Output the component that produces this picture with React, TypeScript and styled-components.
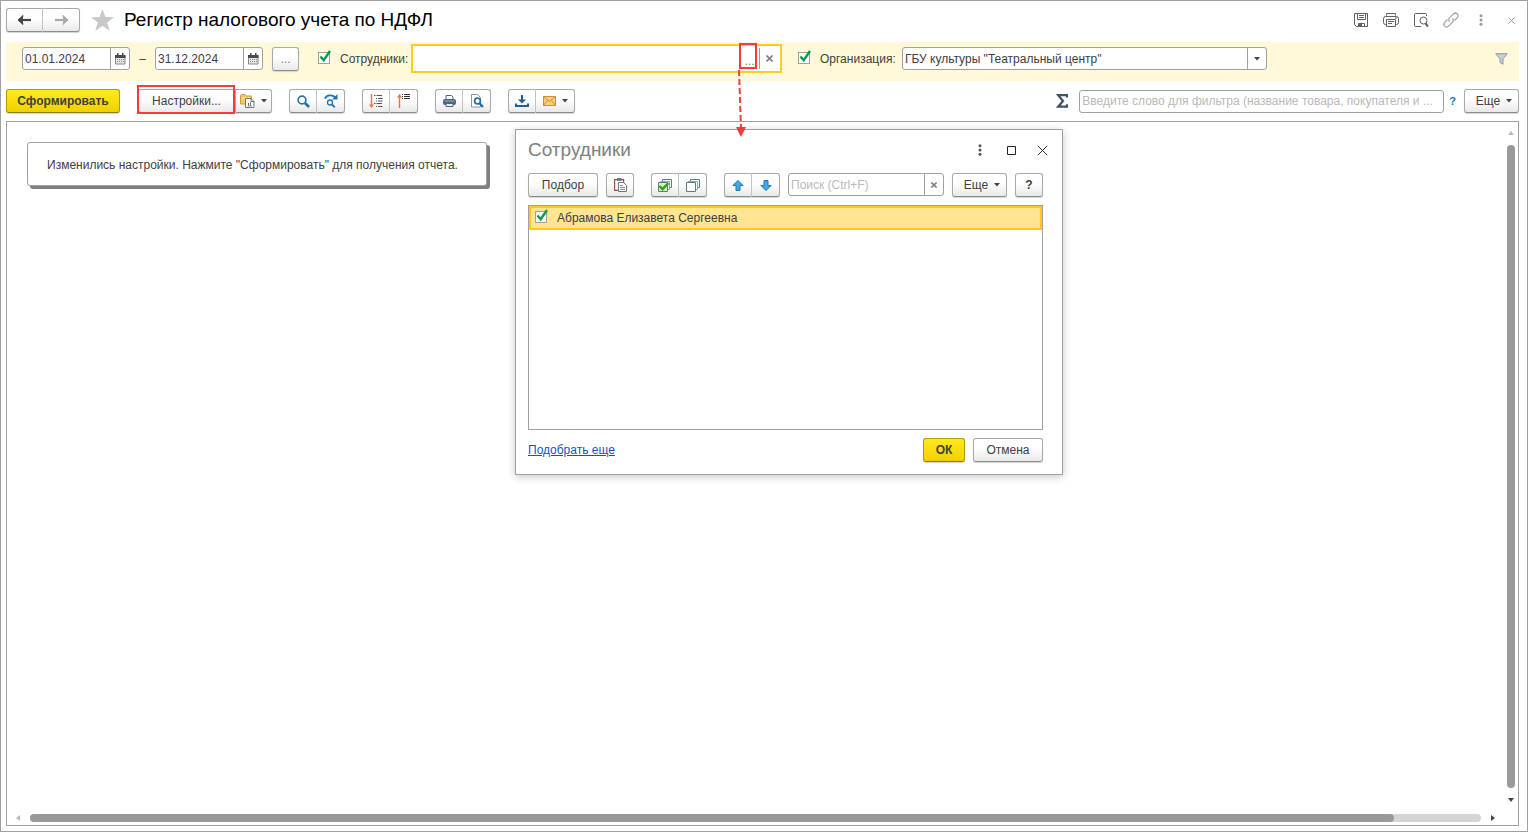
import React from "react";
import styled, { createGlobalStyle, css } from "styled-components";

const GlobalStyle = createGlobalStyle`
  *, *::before, *::after { box-sizing: border-box; }
  body { margin: 0; background: #fff; }
  body, button, input {
    font-family: "Liberation Sans", Arial, sans-serif;
    font-size: 12px;
    line-height: 16px;
    color: #404040;
  }
  svg { display: block; flex: none; }
`;

const Window = styled.main`
  position: relative;
  display: flex;
  flex-direction: column;
  min-height: 100vh;
  padding: 5px 8px 5px 5px;
  border: 1px solid #a0a0a0;
`;

const TitleBar = styled.header`
  display: flex;
  align-items: center;
  height: 28px;
  gap: 11px;
`;

const Title = styled.h1`
  flex: 1;
  margin: 0 0 0 -1px;
  font-size: 19px;
  line-height: 24px;
  font-weight: 400;
  color: #000;
`;

const WindowTools = styled.div`
  display: flex;
  align-items: center;
  gap: 6px;
  margin-right: -4px;
`;

const GhostButton = styled.button<{ $w?: number }>`
  display: flex;
  align-items: center;
  justify-content: center;
  width: ${(p) => p.$w ?? 24}px;
  height: 24px;
  padding: 0;
  border: 0;
  background: transparent;
`;

const buttonFace = css`
  border: 1px solid #a9a9a9;
  border-bottom-color: #8c8c8c;
  background: linear-gradient(#fff 40%, #e9e9e9);
  box-shadow: 0 1px 1px #d4d4d4;
`;

const Button = styled.button<{ $w?: number; $primary?: boolean }>`
  ${buttonFace}
  display: flex;
  flex: none;
  align-items: center;
  justify-content: center;
  gap: 6px;
  width: ${(p) => p.$w ?? 28}px;
  height: 24px;
  padding: 0;
  border-radius: 3px;
  white-space: nowrap;
  ${(p) =>
    p.$primary &&
    css`
      border-color: #b39b00;
      border-bottom-color: #8f7c00;
      background: linear-gradient(#ffea1f, #f2d000);
      font-weight: 700;
    `}
`;

const MoreButton = styled(Button)`
  padding-left: 5px;
`;

const ButtonGroup = styled.div`
  display: flex;
  flex: none;
  & > button { border-radius: 0; }
  & > button + button { border-left: 0; }
  & > button:first-child { border-radius: 3px 0 0 3px; border-right-color: #c0c0c0; }
  & > button:last-child { border-radius: 0 3px 3px 0; }
`;

const FilterBar = styled.section`
  display: flex;
  align-items: center;
  height: 39px;
  margin-top: 8px;
  padding: 0 10px 6px 16px;
  background: #fff9d9;
`;

const Field = styled.div<{ $w: number }>`
  display: flex;
  flex: 0 1 ${(p) => p.$w}px;
  min-width: 0;
  height: 23px;
  border: 1px solid #a0a0a0;
  border-radius: 3px;
  background: #fff;
`;

const FieldInput = styled.input`
  flex: 1;
  width: 0;
  min-width: 0;
  padding: 0 2px;
  border: 0;
  outline: 0;
  background: transparent;
  text-overflow: ellipsis;
  &::placeholder { color: #b9b9b9; opacity: 1; }
`;

const FieldButton = styled.button`
  display: flex;
  flex: none;
  align-items: center;
  justify-content: center;
  width: 19px;
  padding: 0;
  border: 0;
  border-left: 1px solid #a0a0a0;
  background: transparent;
`;

const Dash = styled.span`
  width: 25px;
  text-align: center;
`;

const ActiveField = styled.div`
  position: relative;
  display: flex;
  flex: 0 1 371px;
  align-items: center;
  min-width: 0;
  height: 29px;
  margin-right: 16px;
  padding-right: 2px;
  border: 2px solid #ffcc1f;
  background: #fff;
  & > ${FieldButton} { height: 21px; }
`;

const ChooseButton = styled(FieldButton)`
  border-left: 0;
  align-items: flex-end;
  color: #808080;
`;

const CheckLabel = styled.label`
  display: flex;
  flex: none;
  align-items: center;
  gap: 9px;
`;

const LabelText = styled.span<{ $w?: number }>`
  min-width: ${(p) => p.$w ?? 0}px;
`;

const CheckBox = styled.span`
  position: relative;
  width: 13px;
  height: 14px;
  input {
    display: block;
    appearance: none;
    width: 12px;
    height: 12px;
    margin: 0;
    border: 1px solid #a0a0a0;
    background: #fff;
  }
  svg {
    position: absolute;
    top: -2px;
    left: 0;
    pointer-events: none;
  }
`;

const FilterButton = styled(GhostButton)`
  margin-left: auto;
`;

const Toolbar = styled.section`
  display: flex;
  align-items: center;
  gap: 17px;
  padding: 8px 0;
`;

const SearchArea = styled.div`
  display: flex;
  flex: 1;
  align-items: center;
  justify-content: flex-end;
  gap: 8px;
`;

const SigmaBox = styled.span`
  margin-right: 3px;
`;

const HelpMark = styled.a`
  margin-left: -3px;
  color: #0a7cc4;
  font-size: 11px;
  font-weight: 700;
  text-decoration: none;
`;

const Highlight = styled.span`
  position: absolute;
  inset: -4px 0 -1px -1px;
  border: 2px solid #f23c3c;
  pointer-events: none;
`;

const Highlighted = styled.div`
  position: relative;
  display: flex;
`;

const ChooseHighlight = styled(Highlight)`
  inset: -3px 23px 2px auto;
  width: 18px;
`;

const Arrow = styled.svg`
  position: absolute;
  z-index: 3;
  top: 24px;
  right: 33px;
  pointer-events: none;
`;

const Report = styled.section`
  display: grid;
  flex: 1;
  grid-template-columns: 1fr 15px;
  grid-template-rows: 1fr 15px;
  border: 1px solid #a0a0a0;
`;

const Notice = styled.p`
  justify-self: start;
  align-self: start;
  min-width: 460px;
  margin: 20px;
  padding: 14px 19px 12px;
  border: 1px solid #a0a0a0;
  border-radius: 3px;
  background: #fff;
  box-shadow: 3px 3px 0 #808080;
`;

const VScroll = styled.div`
  display: flex;
  flex-direction: column;
  align-items: center;
  padding: 8px 0 7px;
  gap: 9px;
  span { flex: 1; width: 8px; border-radius: 4px; background: #999; }
`;

const HScroll = styled.div`
  display: flex;
  align-items: center;
  gap: 9px;
  padding: 0 7px 0 8px;
`;

const HTrack = styled.span`
  flex: 1;
  height: 8px;
  border-radius: 4px;
  background: #d5d5d5;
  i { display: block; width: 94%; height: 8px; border-radius: 4px; background: #999; }
`;

const Dialog = styled.section`
  position: absolute;
  z-index: 2;
  top: 128px;
  left: 514px;
  width: 548px;
  padding: 8px 19px 12px 12px;
  border: 1px solid #a0a0a0;
  background: #fff;
  box-shadow: 0 2px 8px rgba(0, 0, 0, 0.22);
`;

const DialogHead = styled.header`
  display: flex;
  align-items: center;
  margin-right: -11px;
  gap: 7px;
`;

const DialogTitle = styled.h2`
  flex: 1;
  margin: 0;
  font-size: 19px;
  line-height: 24px;
  font-weight: 400;
  color: #808080;
`;

const DialogTools = styled.div`
  display: flex;
  gap: 8px;
  margin: 11px 0 8px;
  & > ${ButtonGroup} { margin-left: 9px; }
`;

const List = styled.ul`
  height: 225px;
  margin: 0;
  padding: 0;
  border: 1px solid #a0a0a0;
  list-style: none;
`;

const ListRow = styled.li`
  display: flex;
  align-items: center;
  height: 24px;
  padding-left: 4px;
  border: 2px solid #ffc81f;
  background: #ffe591;
`;

const DialogFoot = styled.footer`
  display: flex;
  align-items: center;
  gap: 8px;
  margin-top: 8px;
`;

const PickLink = styled.a`
  margin-right: auto;
  color: #1a4fc0;
`;

const Caret = () => (
  <svg width="6" height="4" viewBox="0 0 6 4"><path d="M0 0h6L3 3.5z" fill="#444" /></svg>
);

const Cross = ({ size = 7, color = "#808080", w = 1.6 }) => (
  <svg width={size} height={size} viewBox="0 0 10 10" stroke={color} strokeWidth={(w * 10) / size}>
    <path d="M.7.7l8.6 8.6M9.3.7L.7 9.3" />
  </svg>
);

const Dots = ({ color }: { color: string }) => (
  <svg width="4" height="12" viewBox="0 0 4 12" fill={color}>
    <circle cx="2" cy="1.7" r="1.5" /><circle cx="2" cy="6" r="1.5" /><circle cx="2" cy="10.3" r="1.5" />
  </svg>
);

const Calendar = () => (
  <svg width="11" height="13" viewBox="0 0 11 13">
    <path d="M.5 3.500h9.500v8.500h-9.500z" fill="#e6e6e6" stroke="#8a8a8a" />
    <path d="M0 3h10.500v3H0zM2 1h1.500v3H2zM7 1h1.500v3H7z" fill="#4a4a4a" />
    <path d="M2 7.500h7M2 9.500h7" stroke="#8a8a8a" strokeDasharray="1 1" />
  </svg>
);

const Check = () => (
  <svg width="14" height="13" viewBox="0 0 14 13" fill="none">
    <path d="M2.500 6.500l3.200 3.700L12 1" stroke="#0b9a4d" strokeWidth="2.400" />
  </svg>
);

const NavArrow = ({ color, flip }: { color: string; flip?: boolean }) => (
  <svg width="15" height="12" viewBox="0 0 15 12" fill={color} stroke={color}>
    <path d={flip ? "M1 6h9" : "M14 6H5"} strokeWidth="2.200" />
    <path d={flip ? "M9 1.500L14 6l-5 4.500 1-4.500z" : "M6 1.500L1 6l5 4.500L5 6z"} />
  </svg>
);

const Star = () => (
  <svg width="23" height="22" viewBox="0 0 24 23">
    <path d="M12 0l3 8.300 9 .3-7.100 5.400 2.600 8.800L12 17.600l-7.500 5.200L7.100 14 0 8.600l9-.3z" fill="#c8c8c8" />
  </svg>
);

const SaveIcon = () => (
  <svg width="16" height="16" viewBox="0 0 16 16" fill="none" stroke="#606060">
    <path d="M1.500 1.500h13v13h-11l-2-2zM4.500 1.500v6h8v-6M6 3.500h5M6 5.500h5M5.500 14.500v-3h6v3" />
    <path d="M6 12h3v2.500H6z" fill="#606060" stroke="none" />
  </svg>
);

const PrinterOutline = () => (
  <svg width="16" height="16" viewBox="0 0 16 16" fill="none" stroke="#606060">
    <path d="M3.500 3.500v-2h9v2M3.500 12.500h-1q-2 0-2-2v-4q0-2 2-2h11q2 0 2 2v4q0 2-2 2h-1M3.500 7.500h9v7h-9zM5 9.500h6M5 11.500h4M12 6h2" />
  </svg>
);

const PreviewOutline = () => (
  <svg width="16" height="16" viewBox="0 0 16 16" fill="none" stroke="#606060">
    <path d="M8 14.500H2.500q-1 0-1-1v-11q0-1 1-1h10q1 0 1 1V4" />
    <circle cx="10.500" cy="8.500" r="3.500" />
    <path d="M12.500 11.500l2.500 3" strokeWidth="2" />
  </svg>
);

const LinkIcon = () => (
  <svg width="16" height="16" viewBox="0 0 16 16" fill="none" stroke="#a0a0a0" strokeWidth="1.200">
    <path d="M6.500 9.800a2.700 2.700 0 010-3.900l4-4a2.650 2.650 0 013.800 3.800L11.500 8.500M9.500 6.200a2.700 2.700 0 010 3.900l-4 4a2.650 2.650 0 01-3.800-3.800l2.800-2.800" />
  </svg>
);

const Funnel = () => (
  <svg width="13" height="12" viewBox="0 0 13 12">
    <path d="M.7.7h11.600L8 5.800v5.500L5 9.500V5.800z" fill="#c6d0d8" stroke="#8c979f" />
  </svg>
);

const FolderReport = () => (
  <svg width="15" height="14" viewBox="0 0 15 14">
    <path d="M.5 1.500l1-1h3.500l1 1.500h5.500v8h-11z" fill="#f3c968" stroke="#cf9b35" />
    <path d="M1 4h10" stroke="#fbe3a5" />
    <path d="M5.500 4.500h5.500l3 3v6H5.500z" fill="#fff" stroke="#777" />
    <path d="M11 4.500v3h3" fill="none" stroke="#777" />
    <path d="M8.500 12V9" stroke="#c43b3b" /><path d="M10.500 12V8" stroke="#3b8ac4" />
    <path d="M7.500 12h4.500" stroke="#999" />
  </svg>
);

const Magnifier = () => (
  <svg width="13" height="13" viewBox="0 0 13 13" fill="none" stroke="#2471a8">
    <circle cx="5" cy="5" r="3.900" strokeWidth="1.600" />
    <path d="M8 8l4 4" strokeWidth="2.600" />
  </svg>
);

const FindNext = () => (
  <svg width="14" height="14" viewBox="0 0 14 14" fill="none" stroke="#2471a8">
    <path d="M.8 4.500C3 .6 8 .4 11.300 3.300" strokeWidth="1.800" />
    <path d="M13.500 0v5.500H8z" fill="#2471a8" stroke="none" />
    <circle cx="6" cy="8.500" r="2.500" strokeWidth="1.300" />
    <path d="M8 10.500l2.800 2.800" strokeWidth="1.800" />
  </svg>
);

const ExpandGroups = () => (
  <svg width="14" height="14" viewBox="0 0 14 14" fill="none">
    <path d="M2.500 0v12" stroke="#f0703a" strokeWidth="1.400" /><path d="M0 10.500h5L2.500 14z" fill="#f0703a" />
    <path d="M5 1.500h1.500M7.500 1.500H13M7 4.500h1M9 4.500h4.500M7 7h1M9 7h4.500M5 9.500h1.500M7.500 9.500H13M7 12.500h1M9 12.500h4.500" stroke="#555" />
  </svg>
);

const CollapseGroups = () => (
  <svg width="14" height="14" viewBox="0 0 14 14" fill="none">
    <path d="M2.500 14V2" stroke="#f0703a" strokeWidth="1.400" /><path d="M0 3.500h5L2.500 0z" fill="#f0703a" />
    <path d="M5 .5h1M7 .5h6M5 2.500h1M7 2.500h6M5 4.500h1M7 4.500h6" stroke="#333" />
  </svg>
);

const Printer = () => (
  <svg width="13" height="12" viewBox="0 0 13 12">
    <path d="M3 4V.5h5.500L10 2v2" fill="#fff" stroke="#4b6782" />
    <rect y="4" width="13" height="6" rx="2" fill="#4b6782" />
    <path d="M1.500 6h10" stroke="#9fb4c6" />
    <path d="M3 8.500h7v3H3z" fill="#e7edf2" stroke="#4b6782" />
  </svg>
);

const PagePreview = () => (
  <svg width="14" height="14" viewBox="0 0 14 14" fill="none">
    <path d="M1.500.5h6l3 3v9.500h-9z" fill="#fff" stroke="#8796a3" />
    <circle cx="7.500" cy="7" r="2.900" stroke="#2471a8" strokeWidth="1.700" fill="#fff" />
    <path d="M9.500 9.300l3.500 3.700" stroke="#2471a8" strokeWidth="2.300" />
  </svg>
);

const Download = () => (
  <svg width="14" height="13" viewBox="0 0 14 13" fill="none" stroke="#1e5f94" strokeWidth="2">
    <path d="M1 8.500V11h12V8.500M7 0v5" />
    <path d="M3 4.500h8L7 8.500z" fill="#1e5f94" stroke="none" />
  </svg>
);

const Envelope = () => (
  <svg width="13" height="10" viewBox="0 0 13 10" fill="none" stroke="#cf8f2e">
    <path d="M.5.5h12v9H.5z" fill="#fbcf7a" />
    <path d="M.5.5l6 5 6-5M.5 9.500l4-5M12.500 9.500l-4-5" />
  </svg>
);

const Sigma = () => (
  <svg width="12" height="14" viewBox="0 0 12 14" fill="none" stroke="#3f5263" strokeWidth="2.200">
    <path d="M11 3.500V1.200H2.200L7 7l-4.800 5.700H11v-2.500" />
  </svg>
);

const Paste = () => (
  <svg width="13" height="14" viewBox="0 0 13 14">
    <path d="M.6 1.600h9v10.800h-9z" fill="#fff" stroke="#955137" strokeWidth="1.200" />
    <path d="M3 0h4.500v3H3z" fill="#777" />
    <path d="M4.500 4.500h5l3 3v6h-8z" fill="#fff" stroke="#66788a" />
    <path d="M6 7.500h3M6 9.500h5M6 11.500h5" stroke="#8796a3" />
  </svg>
);

const Sheets = ({ checked }: { checked?: boolean }) => (
  <svg width="14" height="13" viewBox="0 0 14 13">
    <path d="M4.500 2.500v-2h9v8h-2" fill="#fff" stroke="#5b7a8f" />
    <path d="M2.500 4.500v-2h9v8h-2" fill="#fff" stroke="#8ea3b2" />
    <path d="M.5 3.500h9v9h-9z" fill={checked ? "#d9efc4" : "#fff"} stroke="#5b7a8f" />
    {checked && <path d="M1.500 7l3 3.200L10.500 4" fill="none" stroke="#35a21c" strokeWidth="2.500" />}
  </svg>
);

const BlueArrow = ({ down }: { down?: boolean }) => (
  <svg width="12" height="11" viewBox="0 0 12 11">
    <path
      d={down ? "M6 10.500L.8 5.500H4v-5h4v5h3.200z" : "M6 .5L.8 5.500H4v5h4v-5h3.200z"}
      fill="#3fa9e8" stroke="#2277b5"
    />
  </svg>
);

const Triangle = ({ d, color = "#444" }: { d: string; color?: string }) => (
  <svg width="6" height="6" viewBox="0 0 6 6"><path d={d} fill={color} /></svg>
);

const Checked = ({ label, w }: { label: string; w?: number }) => (
  <CheckLabel>
    <CheckBox><input type="checkbox" defaultChecked /><Check /></CheckBox>
    <LabelText $w={w}>{label}</LabelText>
  </CheckLabel>
);

const DateField = ({ value, label }: { value: string; label: string }) => (
  <Field $w={108}>
    <FieldInput aria-label={label} defaultValue={value} />
    <FieldButton aria-label="Выбрать дату"><Calendar /></FieldButton>
  </Field>
);

const PeriodButton = styled(Button)`
  margin: 0 19px 0 9px;
  color: #808080;
`;

const SettingsGroup = styled(ButtonGroup)`
  margin-left: 1px;
`;

export default function App() {
  return (
    <>
      <GlobalStyle />
      <Window>
        <TitleBar>
          <ButtonGroup>
            <Button $w={37} aria-label="Назад"><NavArrow color="#444" /></Button>
            <Button $w={37} aria-label="Вперед"><NavArrow color="#aaa" flip /></Button>
          </ButtonGroup>
          <Star />
          <Title>Регистр налогового учета по НДФЛ</Title>
          <WindowTools>
            <GhostButton aria-label="Сохранить"><SaveIcon /></GhostButton>
            <GhostButton aria-label="Печать"><PrinterOutline /></GhostButton>
            <GhostButton aria-label="Просмотр"><PreviewOutline /></GhostButton>
            <GhostButton aria-label="Ссылка"><LinkIcon /></GhostButton>
            <GhostButton aria-label="Меню"><Dots color="#999" /></GhostButton>
            <GhostButton aria-label="Закрыть"><Cross color="#999" w={1} /></GhostButton>
          </WindowTools>
        </TitleBar>

        <FilterBar>
          <DateField value="01.01.2024" label="Начало периода" />
          <Dash>–</Dash>
          <DateField value="31.12.2024" label="Конец периода" />
          <PeriodButton $w={27}>...</PeriodButton>
          <Checked label="Сотрудники:" w={71} />
          <ActiveField>
            <FieldInput aria-label="Сотрудники" />
            <ChooseButton aria-label="Выбрать">...</ChooseButton>
            <FieldButton aria-label="Очистить"><Cross /></FieldButton>
            <ChooseHighlight />
            <Arrow width="12" height="68" viewBox="0 0 12 68">
              <path d="M4 0L6 58" stroke="#f23c3c" strokeWidth="2" strokeDasharray="6 3" />
              <path d="M1 57h10L6 67z" fill="#f23c3c" />
            </Arrow>
          </ActiveField>
          <Checked label="Организация:" w={82} />
          <Field $w={365}>
            <FieldInput aria-label="Организация" defaultValue={'ГБУ культуры "Театральный центр"'} />
            <FieldButton aria-label="Открыть список"><Caret /></FieldButton>
          </Field>
          <FilterButton aria-label="Отбор" $w={16}><Funnel /></FilterButton>
        </FilterBar>

        <Toolbar>
          <Button $w={114} $primary>Сформировать</Button>
          <SettingsGroup>
            <Highlighted>
              <Button $w={97}>Настройки...</Button>
              <Highlight />
            </Highlighted>
            <Button $w={37} aria-label="Варианты отчета"><FolderReport /><Caret /></Button>
          </SettingsGroup>
          <ButtonGroup>
            <Button aria-label="Найти"><Magnifier /></Button>
            <Button aria-label="Найти далее"><FindNext /></Button>
          </ButtonGroup>
          <ButtonGroup>
            <Button aria-label="Развернуть группы"><ExpandGroups /></Button>
            <Button aria-label="Свернуть группы"><CollapseGroups /></Button>
          </ButtonGroup>
          <ButtonGroup>
            <Button aria-label="Печать"><Printer /></Button>
            <Button aria-label="Предварительный просмотр"><PagePreview /></Button>
          </ButtonGroup>
          <ButtonGroup>
            <Button aria-label="Сохранить как"><Download /></Button>
            <Button $w={39} aria-label="Отправить"><Envelope /><Caret /></Button>
          </ButtonGroup>
          <SearchArea>
            <SigmaBox><Sigma /></SigmaBox>
            <Field $w={365}>
              <FieldInput aria-label="Фильтр" placeholder="Введите слово для фильтра (название товара, покупателя и ..." />
            </Field>
            <HelpMark href="#help">?</HelpMark>
            <MoreButton $w={55}>Еще<Caret /></MoreButton>
          </SearchArea>
        </Toolbar>

        <Report>
          <Notice>Изменились настройки. Нажмите "Сформировать" для получения отчета.</Notice>
          <VScroll>
            <Triangle d="M0 5l3-4 3 4z" color="#bbb" />
            <span />
            <Triangle d="M0 1l3 4 3-4z" />
          </VScroll>
          <HScroll>
            <Triangle d="M5 0L1 3l4 3z" color="#bbb" />
            <HTrack><i /></HTrack>
            <Triangle d="M1 0l4 3-4 3z" />
          </HScroll>
        </Report>

        <Dialog role="dialog" aria-label="Сотрудники">
          <DialogHead>
            <DialogTitle>Сотрудники</DialogTitle>
            <GhostButton aria-label="Меню"><Dots color="#555" /></GhostButton>
            <GhostButton aria-label="Развернуть">
              <svg width="9" height="9"><path d="M.5.5h8v8h-8z" fill="none" stroke="#222" /></svg>
            </GhostButton>
            <GhostButton aria-label="Закрыть"><Cross size={11} color="#333" w={1} /></GhostButton>
          </DialogHead>
          <DialogTools>
            <Button $w={70}>Подбор</Button>
            <Button aria-label="Вставить"><Paste /></Button>
            <ButtonGroup>
              <Button aria-label="Отметить все"><Sheets checked /></Button>
              <Button aria-label="Снять отметки"><Sheets /></Button>
            </ButtonGroup>
            <ButtonGroup>
              <Button aria-label="Вверх"><BlueArrow /></Button>
              <Button aria-label="Вниз"><BlueArrow down /></Button>
            </ButtonGroup>
            <Field $w={156}>
              <FieldInput aria-label="Поиск" placeholder="Поиск (Ctrl+F)" />
              <FieldButton aria-label="Очистить"><Cross size={6} /></FieldButton>
            </Field>
            <MoreButton $w={55}>Еще<Caret /></MoreButton>
            <Button aria-label="Справка"><b>?</b></Button>
          </DialogTools>
          <List>
            <ListRow><Checked label="Абрамова Елизавета Сергеевна" /></ListRow>
          </List>
          <DialogFoot>
            <PickLink href="#pick">Подобрать еще</PickLink>
            <Button $w={42} $primary>ОК</Button>
            <Button $w={70}>Отмена</Button>
          </DialogFoot>
        </Dialog>
      </Window>
    </>
  );
}
